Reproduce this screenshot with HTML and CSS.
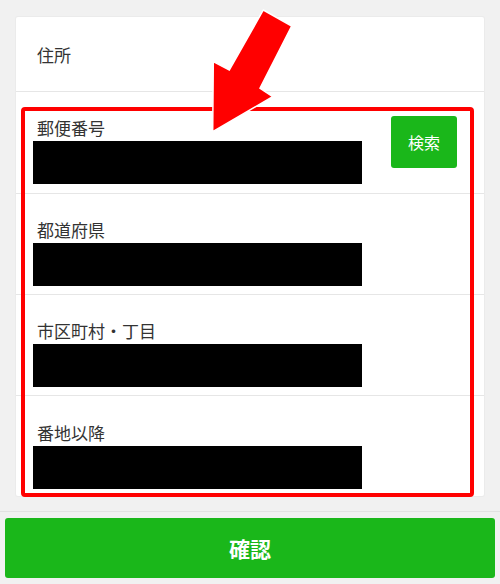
FILE: index.html
```html
<!DOCTYPE html>
<html lang="ja">
<head>
<meta charset="utf-8">
<title>住所</title>
<link rel="stylesheet" href="styles.css">
</head>
<body>
<div class="page">
  <main class="main">
    <section class="card">
      <div class="card-head">住所</div>
      <div class="row row-zip">
        <div class="field">
          <div class="label">郵便番号</div>
          <div class="input"></div>
        </div>
        <button class="search">検索</button>
      </div>
      <div class="row">
        <div class="field">
          <div class="label">都道府県</div>
          <div class="input"></div>
        </div>
      </div>
      <div class="row">
        <div class="field">
          <div class="label">市区町村・丁目</div>
          <div class="input"></div>
        </div>
      </div>
      <div class="row row-last">
        <div class="field">
          <div class="label">番地以降</div>
          <div class="input"></div>
        </div>
      </div>
    </section>
  </main>
  <footer class="footer">
    <button class="confirm">確認</button>
  </footer>
  <div class="highlight"></div>
  <svg class="arrow" width="500" height="584" viewBox="0 0 500 584">
    <polygon points="263.3,10 291.7,26 260,88.3 272.7,96.7 212.7,131.7 213.3,61.7 229.3,70" fill="#ff0000" stroke="#ffffff" stroke-width="1.5" stroke-linejoin="miter"/>
  </svg>
</div>
</body>
</html>
```
FILE: styles.css
```css
html, body {
  margin: 0;
  padding: 0;
}
body {
  background: #f1f1f1;
  font-family: "Noto Sans CJK JP", "Noto Sans", sans-serif;
  color: #333333;
  width: 500px;
  height: 584px;
  overflow: hidden;
}
.page {
  position: relative;
  width: 500px;
  height: 584px;
}
.main {
  padding: 17px 16px 15px 16px;
}
.card {
  background: #ffffff;
  border-radius: 2px;
  box-shadow: 0 0 0 1px #ebebeb;
}
.card-head {
  display: flex;
  align-items: center;
  padding-left: 21px;
  font-size: 17px;
  border-bottom: 1px solid #e6e6e6;
  box-sizing: border-box;
  height: 75px;
}
.row {
  display: flex;
  align-items: flex-start;
  padding: 24px 27px 8px 17px;
  border-bottom: 1px solid #e6e6e6;
  height: 101px;
  box-sizing: border-box;
}
.row-zip {
  height: 102px;
}
.row-last {
  border-bottom: none;
  padding-top: 25px;
  height: 100px;
}
.field {
  flex: 0 0 329px;
}
.label {
  font-size: 17px;
  line-height: 24px;
  padding-left: 4px;
  height: 24px;
}
.input {
  margin-top: 1px;
  height: 43px;
  background: #000000;
}
.search {
  margin-left: auto;
  width: 66px;
  height: 52px;
  border: none;
  border-radius: 3px;
  background: #1ab71a;
  color: #ffffff;
  font-family: "Noto Sans CJK JP", "Noto Sans", sans-serif;
  font-size: 16px;
  padding: 0;
}
.footer {
  border-top: 1px solid #e2e2e2;
  padding: 6px 5px;
}
.confirm {
  display: block;
  width: 100%;
  height: 60px;
  border: none;
  border-radius: 3px;
  background: #1ab71a;
  color: #ffffff;
  font-family: "Noto Sans CJK JP", "Noto Sans", sans-serif;
  font-size: 21px;
  font-weight: bold;
  padding: 0;
}
.highlight {
  position: absolute;
  left: 21px;
  top: 107px;
  width: 453px;
  height: 390px;
  box-sizing: border-box;
  border: 4px solid #ff0000;
  border-radius: 4px;
}
.arrow {
  position: absolute;
  left: 0;
  top: 0;
}
```
